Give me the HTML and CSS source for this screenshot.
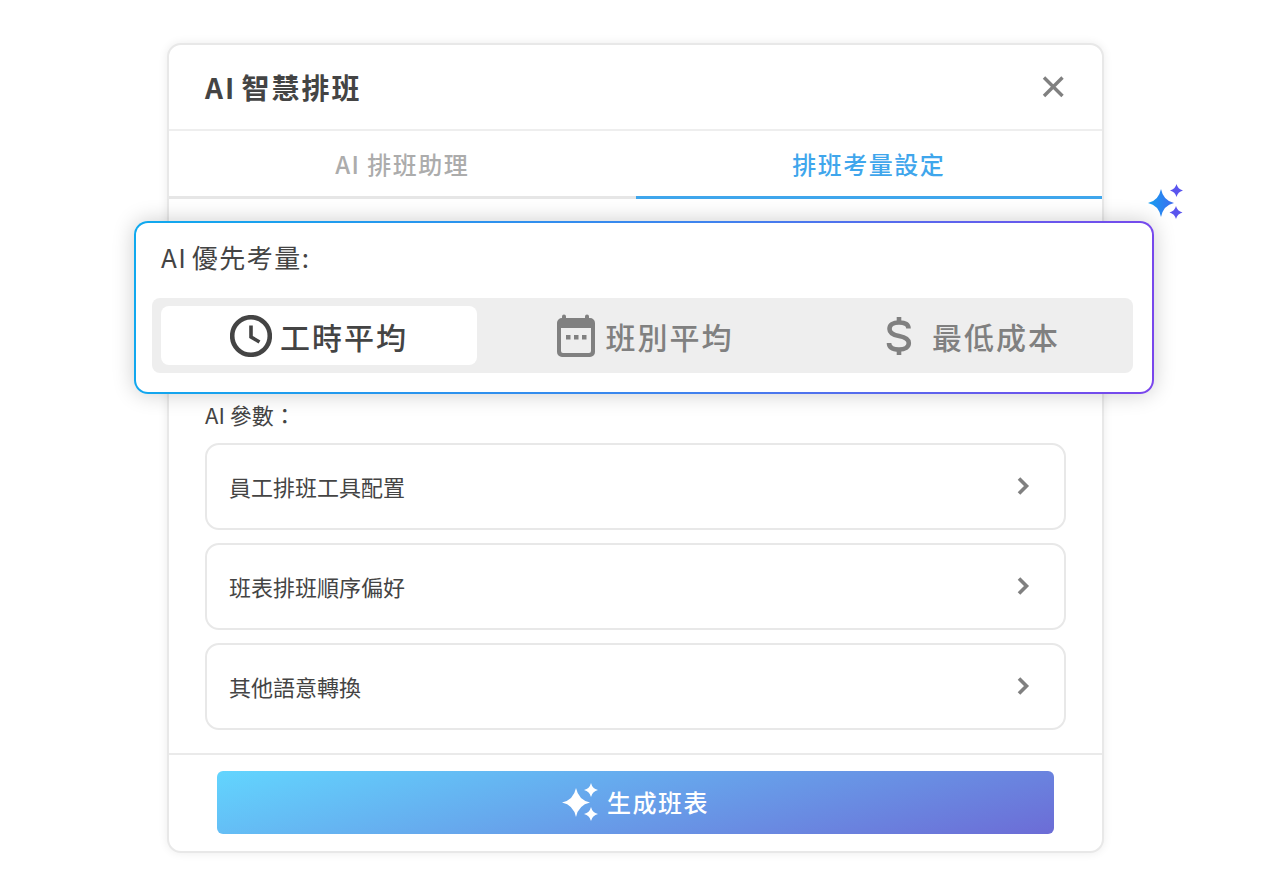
FILE: index.html
```html
<!DOCTYPE html>
<html lang="zh-Hant">
  <head>
    <meta charset="UTF-8" />
    <meta name="viewport" content="width=device-width, initial-scale=1.0" />
    <title>AI 智慧排班</title>
    <link rel="stylesheet" href="styles.css">
  </head>
  <body>
    <svg class="defs" width="0" height="0" aria-hidden="true">
      <defs>
        <linearGradient id="sparkBlue" x1="0" y1="0" x2="1" y2="0">
          <stop offset="0%" stop-color="#14a0f0" />
          <stop offset="100%" stop-color="#3f6bf0" />
        </linearGradient>
      </defs>
    </svg>

    <div class="stage">
      <div class="dialog">
        <div class="dialog_header">
          <h1>AI 智慧排班</h1>
          <svg class="close_icon" width="24" height="24" viewBox="0 0 24 24">
            <path d="M3 2.500 L21.500 21 M21.500 2.500 L3 21" />
          </svg>
        </div>

        <div class="tabs">
          <div class="tab">AI 排班助理</div>
          <div class="tab active">排班考量設定</div>
        </div>

        <div class="dialog_body">
          <div class="param_label">AI 參數：</div>
          <div class="param_row">
            <span>員工排班工具配置</span>
            <svg class="chevron" width="14" height="20" viewBox="0 0 14 20"><path d="M3 2.500 L10.500 10 L3 17.500" /></svg>
          </div>
          <div class="param_row">
            <span>班表排班順序偏好</span>
            <svg class="chevron" width="14" height="20" viewBox="0 0 14 20"><path d="M3 2.500 L10.500 10 L3 17.500" /></svg>
          </div>
          <div class="param_row">
            <span>其他語意轉換</span>
            <svg class="chevron" width="14" height="20" viewBox="0 0 14 20"><path d="M3 2.500 L10.500 10 L3 17.500" /></svg>
          </div>
        </div>

        <div class="dialog_footer">
          <button class="generate_btn">
            <svg width="38" height="38" viewBox="0 0 38 38">
              <path class="spark_white" d="M14 5 Q16.500 17 28 19.500 Q16.500 22 14 34 Q11.500 22 0 19.500 Q11.500 17 14 5 Z" />
              <path class="spark_white" d="M29 0 Q30.300 5.700 36 7 Q30.300 8.300 29 14 Q27.700 8.300 22 7 Q27.700 5.700 29 0 Z" />
              <path class="spark_white" d="M29 24 Q30.300 29.700 36 31 Q30.300 32.300 29 38 Q27.700 32.300 22 31 Q27.700 29.700 29 24 Z" />
            </svg>
            <span>生成班表</span>
          </button>
        </div>
      </div>

      <!-- floating card over the dialog -->
      <div class="priority_card">
        <div class="priority_label">AI 優先考量:</div>
        <div class="segments">
          <div class="segment selected">
            <svg width="42" height="42" viewBox="0 0 42 42">
              <circle class="line" cx="21" cy="21" r="18.800" />
              <path class="line thin" d="M21 10.500 V22 L29.500 27" />
            </svg>
            <span>工時平均</span>
          </div>
          <div class="segment calendar_seg">
            <svg width="40" height="44" viewBox="0 0 40 44">
              <path class="fill" d="M8 0.500 a2 2 0 0 1 2 2 V4 H29 V2.500 a2 2 0 0 1 4 0 V4 H34 a5 5 0 0 1 5 5 V38 a5 5 0 0 1 -5 5 H6 a5 5 0 0 1 -5 -5 V9 a5 5 0 0 1 5 -5 V2.500 a2 2 0 0 1 2 -2 Z M5 14 V37 a2 2 0 0 0 2 2 H33 a2 2 0 0 0 2 -2 V14 Z" fill-rule="evenodd" />
              <rect class="fill" x="10" y="21" width="4.500" height="4.500" />
              <rect class="fill" x="18" y="21" width="4.500" height="4.500" />
              <rect class="fill" x="26" y="21" width="4.500" height="4.500" />
            </svg>
            <span>班別平均</span>
          </div>
          <div class="segment cost_seg">
            <svg width="26" height="40" viewBox="0 0 26 40">
              <path class="line" d="M22.500 12.500 C22.500 8 18.500 6.500 13 6.500 C7 6.500 3.500 9 3.500 13 C3.500 17.500 7.500 19 13 20 C18.500 21 22.800 22.500 22.800 27 C22.800 31 19 33.500 13 33.500 C7 33.500 3 31.500 3 27" />
              <path class="line" d="M13 1 V6.500 M13 33.500 V39" />
            </svg>
            <span class="cost_text">最低成本</span>
          </div>
        </div>
      </div>

      <svg class="sparkles" width="38" height="38" viewBox="0 0 38 38">
        <path fill="url(#sparkBlue)" d="M14 5 Q16.300 16.700 27 19 Q16.300 21.300 14 33 Q11.700 21.300 1 19 Q11.700 16.700 14 5 Z" />
        <path fill="#5a55ee" d="M29.500 0 Q30.800 5.200 36 6.500 Q30.800 7.800 29.500 13 Q28.200 7.800 23 6.500 Q28.200 5.200 29.500 0 Z" />
        <path fill="#5a55ee" d="M29 22 Q30.300 27.200 35.500 28.500 Q30.300 29.800 29 35 Q27.700 29.800 22.500 28.500 Q27.700 27.200 29 22 Z" />
      </svg>
    </div>
  </body>
</html>
```

FILE: styles.css
```css
body {
  margin: 0;
  background-color: #ffffff;
  color: #444444;
  font-family: "Noto Sans CJK TC", "Noto Sans", sans-serif;
}

.defs {
  position: absolute;
}

.stage {
  position: relative;
  width: 1271px;
  height: 896px;
  padding-top: 43px;
  box-sizing: border-box;
}

.dialog {
  width: 937px;
  height: 810px;
  margin: 0 auto;
  box-sizing: border-box;
  display: flex;
  flex-direction: column;
  background-color: #ffffff;
  border: 2px solid #e8e8e8;
  border-radius: 14px;
  box-shadow: 0 0 10px rgba(0, 0, 0, 0.08);
}

.dialog_header {
  height: 84px;
  flex: none;
  display: flex;
  align-items: center;
  justify-content: space-between;
  padding: 0 37px 0 36px;
  border-bottom: 2px solid #eeeeee;
}

h1 {
  margin: 0;
  font-size: 28px;
  line-height: 40px;
  font-weight: 700;
  letter-spacing: 2px;
  word-spacing: -3px;
  color: #444444;
}

.close_icon path {
  fill: none;
  stroke: #808080;
  stroke-width: 3.4px;
}

.tabs {
  display: flex;
  flex: none;
  height: 68px;
}

.tab {
  flex: 1;
  display: flex;
  align-items: center;
  justify-content: center;
  font-size: 24px;
  font-weight: 500;
  letter-spacing: 1.5px;
  color: #acacac;
  border-bottom: 3px solid #e6e6e6;
}

.tab.active {
  color: #3fa6ec;
  border-bottom-color: #3fa6ec;
}

.dialog_body {
  flex: 1;
  padding: 199px 36px 0;
  box-sizing: border-box;
}

.param_label {
  font-size: 22px;
  line-height: 32px;
  margin-bottom: 13px;
  color: #444444;
}

.param_row {
  height: 87px;
  box-sizing: border-box;
  display: flex;
  align-items: center;
  justify-content: space-between;
  margin-bottom: 13px;
  padding: 0 34px 0 22px;
  font-size: 22px;
  color: #444444;
  border: 2px solid #e8e8e8;
  border-radius: 14px;
}

.param_row span {
  margin-bottom: 2px;
}

.chevron {
  margin-bottom: 1px;
}

.chevron path {
  fill: none;
  stroke: #808080;
  stroke-width: 3.6px;
}

.dialog_footer {
  flex: none;
  height: 98px;
  box-sizing: border-box;
  padding: 16px 48px 0;
  border-top: 2px solid #eaeaea;
}

.generate_btn {
  width: 837px;
  height: 63px;
  display: flex;
  align-items: center;
  justify-content: center;
  gap: 7px;
  padding: 0 0 2px;
  border: none;
  border-radius: 6px;
  background-image: linear-gradient(165deg, #62d5fe 0%, #6c6cd6 100%);
  color: #ffffff;
  font-family: inherit;
  font-size: 24px;
  font-weight: 500;
  letter-spacing: 1.5px;
}

.spark_white {
  fill: #ffffff;
}

.priority_card {
  position: absolute;
  left: 134px;
  top: 221px;
  width: 1020px;
  height: 173px;
  box-sizing: border-box;
  padding: 0 19px 0 16px;
  border: 2px solid transparent;
  border-radius: 14px;
  background-image: linear-gradient(#ffffff, #ffffff), linear-gradient(100deg, #0fa9ee 0%, #3f83ee 55%, #7a45ec 100%);
  background-origin: border-box;
  background-clip: padding-box, border-box;
  box-shadow: 0 0 22px rgba(0, 0, 0, 0.2);
}

.priority_label {
  height: 75px;
  display: flex;
  align-items: center;
  padding-left: 9px;
  padding-bottom: 8px;
  box-sizing: border-box;
  font-size: 26px;
  letter-spacing: 1.5px;
  word-spacing: -3px;
  color: #444444;
}

.segments {
  display: grid;
  grid-template-columns: repeat(3, 1fr);
  gap: 8px;
  padding: 8px 8px 8px 9px;
  height: 75px;
  box-sizing: border-box;
  background-color: #eeeeee;
  border-radius: 8px;
}

.segment {
  display: flex;
  align-items: center;
  justify-content: center;
  gap: 8px;
  font-size: 30px;
  font-weight: 500;
  letter-spacing: 2px;
  color: #808080;
  border-radius: 8px;
}

.segment.selected {
  background-color: #ffffff;
  color: #444444;
}

.calendar_seg {
  gap: 10px;
  padding-left: 3px;
}

.cost_seg {
  padding-left: 12px;
}

.segment .line {
  fill: none;
  stroke: #808080;
  stroke-width: 4.6px;
}

.segment .line.thin {
  stroke-width: 3.6px;
}

.segment .fill {
  fill: #808080;
}

.segment.selected .line {
  stroke: #444444;
}

.cost_text {
  margin-left: 12px;
}

.sparkles {
  position: absolute;
  left: 1147px;
  top: 184px;
}
```
